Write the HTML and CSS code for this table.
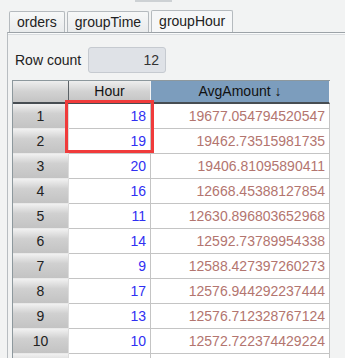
FILE: index.html
```html
<!DOCTYPE html>
<html lang="en">
<head>
    <meta charset="UTF-8">
    <title>groupHour</title>
    <link rel="stylesheet" href="styles.css">
</head>
<body>
    <div class="topbar"></div>

    <div class="tabs">
        <div class="tab">orders</div>
        <div class="tab">groupTime</div>
        <div class="tab active">groupHour</div>
    </div>

    <div class="panel">
        <div class="count-row">
            <span class="count-label">Row count</span>
            <div class="count-box">12</div>
        </div>

        <div class="grid-wrap">
            <div class="grid" id="grid">
                <div class="hcell corner"></div>
                <div class="hcell hour-head">Hour</div>
                <div class="hcell avg-head">AvgAmount ↓</div>
            </div>
            <!-- highlight over the first two Hour cells -->
            <div class="mark"></div>
        </div>
    </div>

    <script>
        var rows = [
            ['18', '19677.054794520547'],
            ['19', '19462.73515981735'],
            ['20', '19406.81095890411'],
            ['16', '12668.45388127854'],
            ['11', '12630.896803652968'],
            ['14', '12592.73789954338'],
            ['9', '12588.427397260273'],
            ['17', '12576.944292237444'],
            ['13', '12576.712328767124'],
            ['10', '12572.722374429224']
        ];
        var grid = document.getElementById('grid');
        rows.forEach(function (r, i) {
            var num = document.createElement('div');
            num.className = 'rowhead';
            num.textContent = i + 1;
            var hour = document.createElement('div');
            hour.className = 'cell hour';
            hour.textContent = r[0];
            var avg = document.createElement('div');
            avg.className = 'cell avg';
            avg.textContent = r[1];
            grid.appendChild(num);
            grid.appendChild(hour);
            grid.appendChild(avg);
        });
        // next row, scrolled below the edge
        ['rowhead', 'cell', 'cell'].forEach(function (c) {
            var d = document.createElement('div');
            d.className = c;
            grid.appendChild(d);
        });
    </script>
</body>
</html>
```

FILE: styles.css
```css
html, body {
    overflow: hidden;
}
body {
    margin: 0;
    background-color: #f2f3f3;
    font-family: 'Liberation Sans', Arial, sans-serif;
    font-size: 14px;
    color: #222;
}
.topbar {
    height: 2px;
    width: 37px;
    margin-left: 135px;
    background-color: #cdd1d4;
}
.tabs {
    display: flex;
    align-items: flex-end;
    gap: 2px;
    margin-top: 8px;
    padding-left: 9px;
}
.tab {
    box-sizing: border-box;
    height: 21px;
    padding: 0 7px;
    line-height: 20px;
    border: 1px solid #b5babe;
    border-bottom: none;
    border-radius: 2px 2px 0 0;
    background: linear-gradient(#f7f8f8, #e9ebec);
    color: #222;
}
.tab.active {
    height: 22px;
    line-height: 21px;
    background: #f6f7f8;
}
.panel {
    margin-left: 7px;
    border-top: 1px solid #9ca2a7;
    border-left: 1px solid #b8bdc1;
    box-shadow: inset 0 1px 0 #fafbfb, inset 0 2px 0 #d9dcdf;
    height: 340px;
}
.count-row {
    display: flex;
    align-items: center;
    gap: 7px;
    padding: 14px 0 0 7px;
}
.count-label {
    color: #222;
}
.count-box {
    box-sizing: border-box;
    width: 78px;
    height: 26px;
    padding-right: 6px;
    line-height: 24px;
    text-align: right;
    background-color: #dfe2e7;
    border: 1px solid #c6cad0;
    border-radius: 3px;
    color: #333;
}
.grid-wrap {
    position: relative;
    margin: 7px 0 0 4px;
    width: 318px;
}
.grid {
    display: grid;
    grid-template-columns: 56px 82px 179px;
    border-top: 1px solid #8d989d;
    border-left: 1px solid #8d989d;
}
.hcell {
    box-sizing: border-box;
    height: 23px;
    line-height: 21px;
    text-align: center;
    border-bottom: 2px solid #474d52;
    color: #111;
}
.corner {
    background: linear-gradient(#eeeeee, #d2d2d2 50%, #c4c4c4);
    border-right: 1px solid #5b6166;
}
.hour-head {
    background: linear-gradient(#eeeeee, #d2d2d2 50%, #c4c4c4);
    border-right: 1px solid #f4f4f4;
}
.avg-head {
    background-color: #7c9dbd;
    border-right: 1px solid #f4f4f4;
}
.rowhead {
    box-sizing: border-box;
    height: 25px;
    line-height: 24px;
    text-align: center;
    background: linear-gradient(#f1f1f1, #d0d0d0 40%, #c3c3c3);
    border-right: 1px solid #dcdcdc;
    border-bottom: 1px solid #e9e9e9;
    color: #222;
}
.cell {
    box-sizing: border-box;
    height: 25px;
    line-height: 24px;
    padding-right: 4px;
    text-align: right;
    background-color: #fff;
    border-right: 1px solid #c4c4c4;
    border-bottom: 1px solid #c4c4c4;
}
.hour {
    color: #3030f2;
}
.avg {
    color: #b3756f;
}
.mark {
    position: absolute;
    left: 53px;
    top: 20px;
    width: 89px;
    height: 53px;
    box-sizing: border-box;
    border: 3px solid #f03b3b;
}
```
